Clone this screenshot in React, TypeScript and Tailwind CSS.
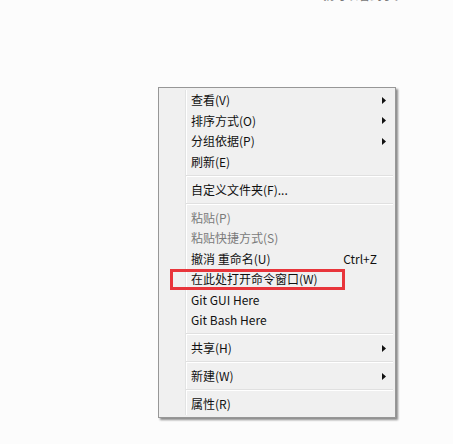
import React from "react";

type Item =
  | { type: "sep" }
  | { type: "item"; label: string; arrow?: boolean; disabled?: boolean; shortcut?: string; boxed?: boolean };

const items: Item[] = [
  { type: "item", label: "查看(V)", arrow: true },
  { type: "item", label: "排序方式(O)", arrow: true },
  { type: "item", label: "分组依据(P)", arrow: true },
  { type: "item", label: "刷新(E)" },
  { type: "sep" },
  { type: "item", label: "自定义文件夹(F)..." },
  { type: "sep" },
  { type: "item", label: "粘贴(P)", disabled: true },
  { type: "item", label: "粘贴快捷方式(S)", disabled: true },
  { type: "item", label: "撤消 重命名(U)", shortcut: "Ctrl+Z" },
  { type: "item", label: "在此处打开命令窗口(W)", boxed: true },
  { type: "item", label: "Git GUI Here" },
  { type: "item", label: "Git Bash Here" },
  { type: "sep" },
  { type: "item", label: "共享(H)", arrow: true },
  { type: "sep" },
  { type: "item", label: "新建(W)", arrow: true },
  { type: "sep" },
  { type: "item", label: "属性(R)" },
];

function Arrow() {
  return (
    <svg width="4" height="7" viewBox="0 0 4 7">
      <path d="M0 0L4 3.5L0 7Z" fill="#111" />
    </svg>
  );
}

export default function App() {
  return (
    <div
      className="w-[453px] h-[444px] overflow-hidden bg-[#fcfcfc]"
      style={{ fontFamily: '"Microsoft YaHei", "Noto Sans CJK SC", "Noto Sans", sans-serif' }}
    >
      <div className="h-[3px] overflow-hidden pl-[322px]">
        <div className="-mt-[13px] text-[12px] leading-[16px] text-[#777] whitespace-nowrap">就可以看到了。</div>
      </div>
      <div className="ml-[158px] mt-[84px] w-[238px] border border-[#979797] bg-[#f0f0f0] shadow-[2px_2px_2px_rgba(0,0,0,0.45)] p-[2px]">
        <div className="bg-[linear-gradient(to_right,transparent_24px,#e2e3e3_24px,#e2e3e3_25px,#ffffff_25px,#ffffff_26px,transparent_26px)]">
          {items.map((it, i) =>
            it.type === "sep" ? (
              <div key={i} className="h-[7.5px] flex flex-col justify-center pl-[25px]">
                <div className="h-px bg-[#e0e0e0]" />
                <div className="h-px bg-white" />
              </div>
            ) : (
              <div
                key={i}
                className={`relative flex items-center h-[20.5px] pl-[30px] text-[12px] leading-none whitespace-nowrap ${
                  it.disabled ? "text-[#7a7a7a]" : "text-[#111]"
                }`}
              >
                <span className="flex-1">{it.label}</span>
                {it.shortcut && <span className="text-[12px]">{it.shortcut}</span>}
                <span className="w-[16px] flex items-center pl-[5px]">{it.arrow && <Arrow />}</span>
                {it.boxed && (
                  <span className="absolute left-[9px] top-0 w-[175px] h-[21px] border-[3px] border-[#e8353b]" />
                )}
              </div>
            )
          )}
        </div>
      </div>
    </div>
  );
}
